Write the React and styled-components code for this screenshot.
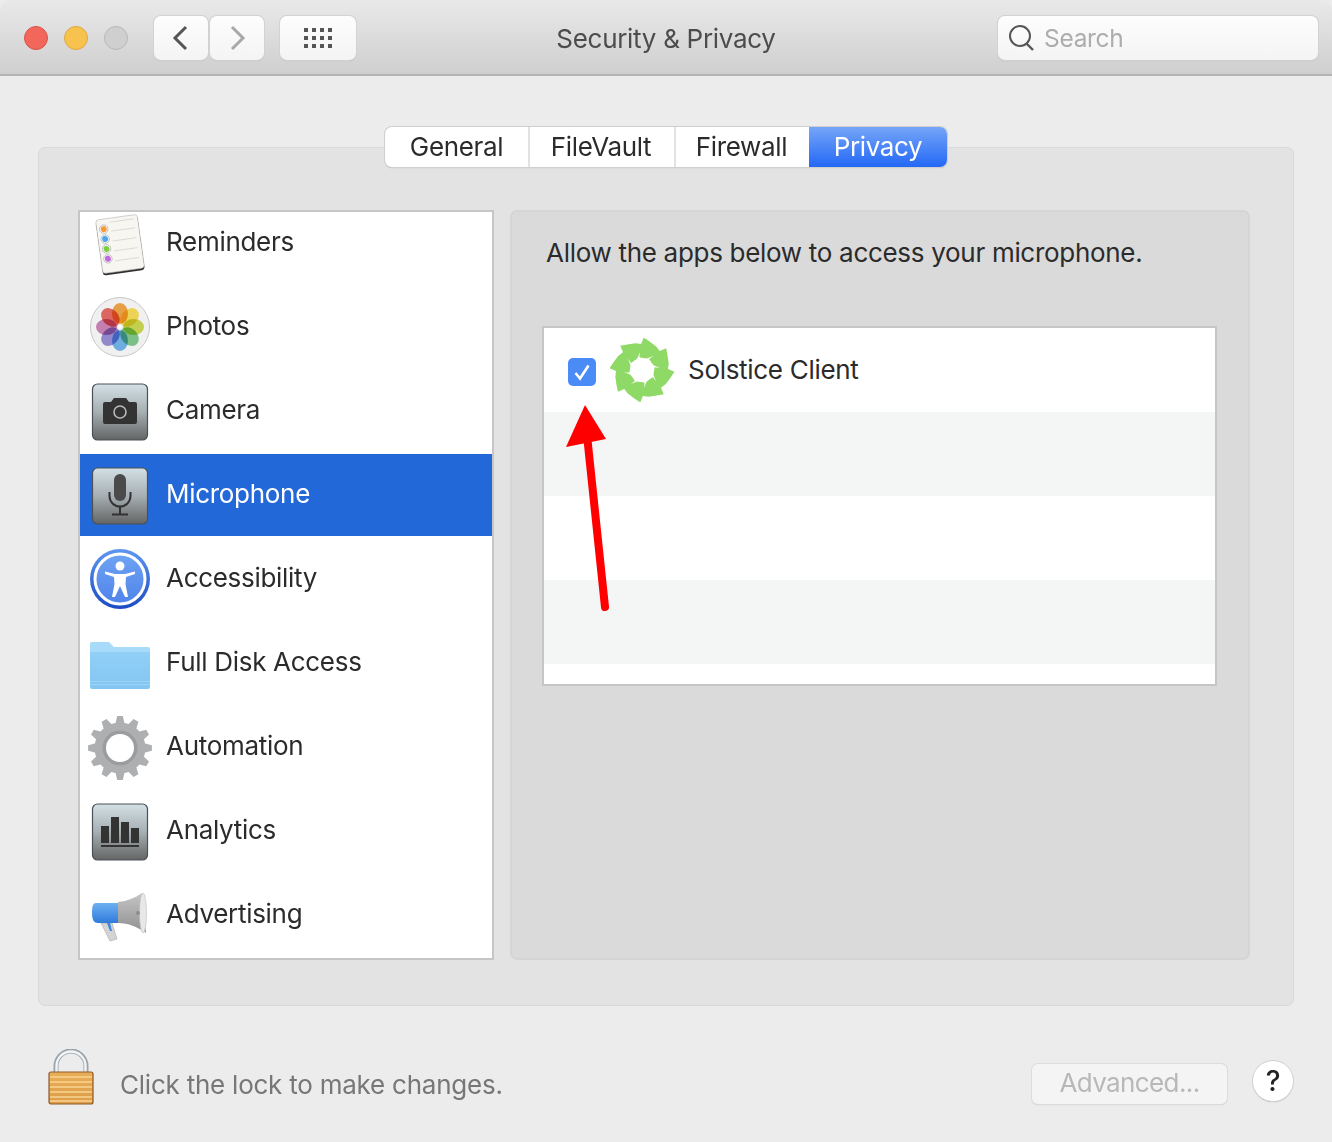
import React from 'react';
import styled, { createGlobalStyle } from 'styled-components';

const GlobalStyle = createGlobalStyle`
  html, body {
    margin: 0;
    padding: 0;
    background: #ececec;
  }
  * {
    box-sizing: border-box;
  }
`;

const Page = styled.div`
  position: relative;
  width: 1332px;
  height: 1142px;
  overflow: hidden;
  background: #ececec;
  font-family: Inter, "Liberation Sans", sans-serif;
  font-size: 26px;
  letter-spacing: -0.3px;
  color: #2b2b2b;
`;

const TitleBar = styled.header`
  height: 76px;
  display: flex;
  align-items: flex-start;
  padding: 16px 14px 0 24px;
  background: linear-gradient(#e9e9e9, #cfcfcf);
  border-bottom: 2px solid #b4b4b4;
  border-radius: 10px 10px 0 0;
`;

const Lights = styled.div`
  display: flex;
  gap: 16px;
  margin-top: 10px;
  margin-right: 26px;
`;

const Light = styled.span`
  width: 24px;
  height: 24px;
  border-radius: 50%;
  background: ${props => props.$fill};
  border: 1px solid ${props => props.$edge};
`;

const ToolButton = styled.div`
  width: ${props => props.$width}px;
  height: 44px;
  margin-right: ${props => props.$gap}px;
  display: flex;
  align-items: center;
  justify-content: center;
  background: linear-gradient(#fdfdfd, #f4f4f4);
  border-radius: 7px;
  box-shadow: 0 0 0 1px #d2d2d2, 0 1px 1px #a8a8a8;
`;

const Title = styled.h1`
  position: absolute;
  left: 0;
  right: 0;
  top: 21px;
  margin: 0;
  text-align: center;
  font-size: 26px;
  line-height: 36px;
  font-weight: 400;
  color: #4c4c4c;
`;

const SearchBox = styled.div`
  width: 320px;
  height: 44px;
  margin-left: auto;
  display: flex;
  align-items: center;
  gap: 10px;
  padding-left: 10px;
  background: linear-gradient(#fdfdfd, #f4f4f4);
  border-radius: 7px;
  box-shadow: 0 0 0 1px #d2d2d2, 0 1px 1px #a8a8a8;
  font-size: 24.5px;
  color: #adadad;
`;

const Content = styled.main`
  padding: 71px 38px 0;
`;

const Group = styled.section`
  height: 859px;
  background: #e3e3e3;
  border: 1px solid #d9d9d9;
  border-radius: 7px;
`;

const Tabs = styled.nav`
  display: flex;
  width: 562px;
  height: 40px;
  margin: -21px auto 0;
  border-radius: 7px;
  background: #fff;
  box-shadow: 0 0 0 1px #cfcfcf, 0 1px 1px #a8a8a8;
  letter-spacing: -0.35px;
`;

const Tab = styled.div`
  width: ${props => props.$width}px;
  display: flex;
  align-items: center;
  justify-content: center;
  padding: 0 ${props => (props.$divider ? 2 : 0)}px 2px 0;
  border-left: ${props => (props.$divider ? '2px solid #e2e2e2' : 'none')};
  border-radius: ${props => (props.$active ? '0 7px 7px 0' : '0')};
  background: ${props => (props.$active ? 'linear-gradient(#76a5f8, #2369f6)' : 'transparent')};
  color: ${props => (props.$active ? '#fff' : '#2b2b2b')};
`;

const Columns = styled.div`
  display: flex;
  gap: 16px;
  margin-top: 43px;
  padding: 0 43px 0 39px;
`;

const List = styled.div`
  width: 416px;
  height: 750px;
  overflow: hidden;
  background: #fff;
  border: 2px solid #c6c6c6;
`;

const ListInner = styled.div`
  margin-top: -11px;
`;

const Row = styled.div`
  height: 84px;
  display: flex;
  align-items: center;
  gap: 16px;
  padding-left: 10px;
  color: ${props => (props.$selected ? '#fff' : '#2b2b2b')};
  background: ${props => (props.$selected ? '#2368d9' : 'transparent')};
  background-clip: padding-box;
  border-top: ${props => (props.$selected ? '1px solid #fff' : 'none')};
  border-bottom: ${props => (props.$selected ? '1px solid #fff' : 'none')};
`;

const RowLabel = styled.span`
  padding-bottom: 4px;
`;

const RowIcon = styled.svg`
  width: 60px;
  height: 60px;
  flex: none;
  overflow: visible;
`;

const Panel = styled.div`
  width: 740px;
  height: 750px;
  padding: 25px 0 0 30px;
  background: #dadada;
  border: 2px solid #d5d5d5;
  border-radius: 7px;
`;

const PanelText = styled.p`
  margin: 0 0 0 4px;
  line-height: 32px;
  color: #2b2b2b;
`;

const AppTable = styled.div`
  width: 675px;
  height: 360px;
  margin-top: 57px;
  display: flex;
  flex-direction: column;
  background: #fff;
  border: 2px solid #c6c6c6;
`;

const AppRow = styled.div`
  height: 84px;
  flex: none;
  display: flex;
  align-items: center;
  padding-left: 24px;
  background: ${props => (props.$striped ? '#f4f5f5' : '#fff')};
`;

const Checkbox = styled.span`
  width: 28px;
  height: 28px;
  margin: 4px 14px 0 0;
  display: flex;
  align-items: center;
  justify-content: center;
  background: #4b8bf5;
  border-radius: 5px;
`;

const AppName = styled.span`
  margin-left: 14px;
  padding-bottom: 2px;
`;

const Footer = styled.footer`
  display: flex;
  align-items: flex-start;
  margin-top: 43px;
  padding: 0 1px 0 10px;
`;

const LockText = styled.span`
  margin: 20px 0 0 26px;
  line-height: 32px;
  letter-spacing: -0.23px;
  color: #777;
`;

const AdvancedButton = styled.div`
  width: 195px;
  height: 40px;
  margin: 15px 26px 0 auto;
  padding-bottom: 3px;
  display: flex;
  align-items: center;
  justify-content: center;
  background: #f4f4f4;
  border-radius: 6px;
  box-shadow: 0 0 0 1px #dcdcdc, 0 1px 1px #bdbdbd;
  letter-spacing: -0.6px;
  color: #b8b8b8;
`;

const HelpButton = styled.div`
  width: 40px;
  height: 40px;
  margin-top: 12px;
  display: flex;
  align-items: center;
  justify-content: center;
  background: #fff;
  border-radius: 50%;
  box-shadow: 0 0 0 1px #d2d2d2, 0 1px 1px #a0a0a0;
  font-size: 28px;
  font-weight: 500;
  color: #222;
`;

const ArrowOverlay = styled.svg`
  position: absolute;
  left: 560px;
  top: 400px;
  width: 60px;
  height: 215px;
`;

const polar = (cx, cy, r, deg) => {
  const a = (deg * Math.PI) / 180;
  return `${(cx + r * Math.cos(a)).toFixed(2)} ${(cy + r * Math.sin(a)).toFixed(2)}`;
};

const gearPath = () => {
  const points = [];
  for (let i = 0; i < 12; i++) {
    const a = i * 30 - 90;
    points.push(polar(30, 30, 25.5, a - 10), polar(30, 30, 32, a - 5), polar(30, 30, 32, a + 5), polar(30, 30, 25.5, a + 10));
  }
  return `M${points.join('L')}Z`;
};

// long blades that taper clockwise and end in a hooked tip, outside and around the hole
const swirlPath = () => {
  const outer = [];
  const inner = [];
  for (let i = 0; i < 8; i++) {
    const a = i * 45 - 87;
    outer.push(polar(32, 32, 32.5, a), polar(32, 32, 29.5, a + 12), polar(32, 32, 27.5, a + 28), polar(32, 32, 26, a + 40));
    inner.push(polar(32, 32, 12, a + 2), polar(32, 32, 12.5, a + 20), polar(32, 32, 18, a + 36), polar(32, 32, 13, a + 30));
  }
  return `M${outer.join('L')}ZM${inner.join('L')}Z`;
};

const RemindersIcon = () => (
  <RowIcon viewBox="0 0 60 60">
    <g transform="rotate(-8 30 31)">
      <rect x="9" y="5" width="42" height="55" rx="3" fill="#2e2e2e" />
      <rect x="9" y="4" width="42" height="54" rx="3" fill="#f7f6f1" stroke="#b5b5b5" strokeWidth="0.6" />
      <line x1="23" y1="8" x2="47" y2="8" stroke="#d6d6d0" strokeWidth="0.8" />
      {[
        ['#f59a34', 14],
        ['#4aa6f0', 24],
        ['#7ccf45', 34],
        ['#c169dc', 44],
      ].map(([color, y]) => (
        <g key={y}>
          <circle cx="16" cy={y} r="4.2" fill="#fff" stroke="#aaa" strokeWidth="0.7" />
          <circle cx="16" cy={y} r="3" fill={color} />
          <line x1="23" y1={y + 3} x2="47" y2={y + 3} stroke="#d6d6d0" strokeWidth="0.8" />
        </g>
      ))}
    </g>
  </RowIcon>
);

const petals = ['#f4a94a', '#fbe15a', '#cfdc55', '#82cc90', '#74b8ee', '#9a92d8', '#d088ba', '#ea6c66'];

const PhotosIcon = () => (
  <RowIcon viewBox="0 0 60 60">
    <circle cx="30" cy="30" r="29.5" fill="#f0f0f0" stroke="#c8c8c8" />
    {petals.map((color, i) => (
      <ellipse
        key={color}
        cx="30"
        cy="16.5"
        rx="8"
        ry="10.5"
        fill={color}
        transform={`rotate(${i * 45} 30 30)`}
        style={{ mixBlendMode: 'multiply' }}
      />
    ))}
    <circle cx="30" cy="30" r="1.2" fill="#fff" />
  </RowIcon>
);

const Tile = ({ id, children }) => (
  <RowIcon viewBox="0 0 60 60">
    <defs>
      <linearGradient id={id} x1="0" y1="0" x2="0" y2="1">
        <stop offset="0" stopColor="#d3e0e6" />
        <stop offset="0.5" stopColor="#a6afb2" />
        <stop offset="1" stopColor="#646464" />
      </linearGradient>
    </defs>
    <rect x="2.5" y="3" width="55" height="56" rx="5" fill={`url(#${id})`} stroke="#4a5058" strokeWidth="1.2" />
    {children}
  </RowIcon>
);

const CameraIcon = () => (
  <Tile id="cameraTile">
    <path d="M15 21h6l3-4h12l3 4h6a2 2 0 0 1 2 2v18a2 2 0 0 1-2 2H15a2 2 0 0 1-2-2V23a2 2 0 0 1 2-2z" fill="#333" />
    <circle cx="30" cy="31" r="6" fill="none" stroke="#b8b8b8" strokeWidth="1.6" />
  </Tile>
);

const MicIcon = () => (
  <Tile id="micTile">
    <rect x="24" y="9" width="12" height="27" rx="6" fill="#4a4a4a" />
    <path d="M19.500 27v4a10.500 10.500 0 0 0 21 0v-4" fill="none" stroke="#333" strokeWidth="2" />
    <path d="M30 42v7M22 49.500h16" fill="none" stroke="#333" strokeWidth="2" />
  </Tile>
);

const AccessibilityIcon = () => (
  <RowIcon viewBox="0 0 60 60">
    <defs>
      <linearGradient id="accessRim" x1="0" y1="0" x2="0" y2="1">
        <stop offset="0" stopColor="#5d97f0" />
        <stop offset="1" stopColor="#1c4cc4" />
      </linearGradient>
      <linearGradient id="accessFill" x1="0" y1="0" x2="0" y2="1">
        <stop offset="0" stopColor="#6fa3f3" />
        <stop offset="1" stopColor="#4f84ea" />
      </linearGradient>
    </defs>
    <circle cx="30" cy="30" r="30" fill="url(#accessRim)" />
    <circle cx="30" cy="30" r="25" fill="url(#accessFill)" stroke="#fff" strokeWidth="3" />
    <circle cx="30" cy="17" r="4.500" fill="#fff" />
    <path d="M15 22.500L25 25H35L45 22.500V25L36 28L35.500 35L38 48H35L30 37L25 48H22L24.500 35L24 28L15 25Z" fill="#fff" />
  </RowIcon>
);

const FolderIcon = () => (
  <RowIcon viewBox="0 0 60 60">
    <defs>
      <linearGradient id="folderFill" x1="0" y1="0" x2="0" y2="1">
        <stop offset="0" stopColor="#93d0f7" />
        <stop offset="1" stopColor="#82c6f2" />
      </linearGradient>
    </defs>
    <g transform="translate(0 7)">
      <path d="M0 4a2 2 0 0 1 2-2h17l5 5h34a2 2 0 0 1 2 2v6H0z" fill="#a8dbf9" />
      <path d="M0 9h60v38a2 2 0 0 1-2 2H2a2 2 0 0 1-2-2z" fill="url(#folderFill)" />
      <path d="M0 9h60v3H0z" fill="#a6dbfa" />
      <path d="M0 41.500h60M0 44.500h60" stroke="#9dd3f5" strokeWidth="1" />
    </g>
  </RowIcon>
);

const GearIcon = () => (
  <RowIcon viewBox="0 0 60 60">
    <path d={gearPath()} fill="#adafb1" transform="translate(0 1)" />
    <circle cx="30" cy="31" r="17.500" fill="#9a9c9e" />
    <circle cx="30" cy="31" r="14" fill="#fff" />
  </RowIcon>
);

const AnalyticsIcon = () => (
  <Tile id="analyticsTile">
    <path d="M11 25h8v17h-8zM21 16h8v26h-8zM31 21h8v21h-8zM41 27h8v15h-8z" fill="#333" />
    <rect x="11" y="44" width="38" height="2" fill="#333" />
  </Tile>
);

const MegaphoneIcon = () => (
  <RowIcon viewBox="0 0 60 60">
    <defs>
      <linearGradient id="hornBlue" x1="0" y1="0" x2="0" y2="1">
        <stop offset="0" stopColor="#6db0f2" />
        <stop offset="1" stopColor="#2f7bdb" />
      </linearGradient>
      <linearGradient id="hornGrey" x1="0" y1="0" x2="0" y2="1">
        <stop offset="0" stopColor="#c5c5c5" />
        <stop offset="1" stopColor="#8f8f8f" />
      </linearGradient>
    </defs>
    <path d="M11 38h11l5 16-7 2z" fill="#d4d4d4" stroke="#a8a8a8" strokeWidth="0.6" />
    <path d="M17 38h3l2 8h-2z" fill="#3f86e0" />
    <path d="M6 18h22v20H8c-4 0-6-3-6-10s1-10 4-10z" fill="url(#hornBlue)" />
    <path d="M28 17c9-1 17-4 24-9l4 40c-8-6-18-10-28-10z" fill="url(#hornGrey)" />
    <ellipse cx="53" cy="28" rx="3.500" ry="20" fill="#e8e8e8" stroke="#bdbdbd" strokeWidth="0.6" />
    <circle cx="48" cy="28" r="2" fill="#8d8d8d" />
  </RowIcon>
);

const SwirlIcon = () => (
  <svg width="64" height="64" viewBox="0 0 64 64">
    <path d={swirlPath()} fill="#8fd966" fillRule="evenodd" />
  </svg>
);

const LockIcon = () => (
  <svg width="46" height="56" viewBox="0 0 46 56">
    <defs>
      <linearGradient id="lockBody" x1="0" y1="0" x2="0" y2="1">
        <stop offset="0" stopColor="#e9ad58" />
        <stop offset="1" stopColor="#dd9c48" />
      </linearGradient>
    </defs>
    <path d="M8 24V17a15 15 0 0 1 30 0v7" fill="none" stroke="#9aa4ac" strokeWidth="5" />
    <path d="M8.500 24V17a14.500 14.500 0 0 1 29 0v7" fill="none" stroke="#f2f4f6" strokeWidth="2.400" />
    <rect x="1" y="23" width="44" height="32" rx="2" fill="url(#lockBody)" stroke="#8f5a2a" strokeWidth="1.200" />
    {[28, 33, 38, 43, 48, 52].map(y => (
      <line key={y} x1="2" y1={y} x2="44" y2={y} stroke="#f8d592" strokeWidth="1.400" />
    ))}
  </svg>
);

const rows = [
  { label: 'Reminders', Icon: RemindersIcon },
  { label: 'Photos', Icon: PhotosIcon },
  { label: 'Camera', Icon: CameraIcon },
  { label: 'Microphone', Icon: MicIcon, selected: true },
  { label: 'Accessibility', Icon: AccessibilityIcon },
  { label: 'Full Disk Access', Icon: FolderIcon },
  { label: 'Automation', Icon: GearIcon },
  { label: 'Analytics', Icon: AnalyticsIcon },
  { label: 'Advertising', Icon: MegaphoneIcon },
];

const tabs = [
  { label: 'General', width: 143 },
  { label: 'FileVault', width: 146, divider: true },
  { label: 'Firewall', width: 135, divider: true },
  { label: 'Privacy', width: 138, active: true },
];

export default function App() {
  return (
    <Page>
      <GlobalStyle />
      <TitleBar>
        <Lights>
          <Light $fill="#f2665c" $edge="#d9544a" />
          <Light $fill="#f8c24f" $edge="#e0a83c" />
          <Light $fill="#cfcfcf" $edge="#b8b8b8" />
        </Lights>
        <ToolButton $width={54} $gap={2}>
          <svg width="20" height="26" viewBox="0 0 20 26">
            <path d="M15 2L4 13l11 11" fill="none" stroke="#555" strokeWidth="3" />
          </svg>
        </ToolButton>
        <ToolButton $width={54} $gap={16}>
          <svg width="20" height="26" viewBox="0 0 20 26">
            <path d="M5 2l11 11L5 24" fill="none" stroke="#a8a8a8" strokeWidth="3" />
          </svg>
        </ToolButton>
        <ToolButton $width={76} $gap={0}>
          <svg width="28" height="20" viewBox="0 0 28 20" fill="#555">
            {[0, 8, 16].map(y =>
              [0, 8, 16, 24].map(x => <rect key={`${x}-${y}`} x={x} y={y} width="4" height="4" />)
            )}
          </svg>
        </ToolButton>
        <Title>Security &amp; Privacy</Title>
        <SearchBox>
          <svg width="26" height="28" viewBox="0 0 26 28">
            <circle cx="12" cy="12" r="10" fill="none" stroke="#555" strokeWidth="2" />
            <path d="M18.500 19.500L25 26" stroke="#555" strokeWidth="2.400" />
          </svg>
          Search
        </SearchBox>
      </TitleBar>

      <Content>
        <Group>
          <Tabs>
            {tabs.map(tab => (
              <Tab key={tab.label} $width={tab.width} $divider={tab.divider} $active={tab.active}>
                {tab.label}
              </Tab>
            ))}
          </Tabs>
          <Columns>
            <List>
              <ListInner>
                {rows.map(({ label, Icon, selected }) => (
                  <Row key={label} $selected={selected}>
                    <Icon />
                    <RowLabel>{label}</RowLabel>
                  </Row>
                ))}
              </ListInner>
            </List>
            <Panel>
              <PanelText>Allow the apps below to access your microphone.</PanelText>
              <AppTable>
                <AppRow>
                  <Checkbox>
                    <svg width="20" height="20" viewBox="0 0 20 20">
                      <path d="M3.500 11l4.500 5.500L16.500 3.500" fill="none" stroke="#fff" strokeWidth="2.600" />
                    </svg>
                  </Checkbox>
                  <SwirlIcon />
                  <AppName>Solstice Client</AppName>
                </AppRow>
                <AppRow $striped />
                <AppRow />
                <AppRow $striped />
              </AppTable>
            </Panel>
          </Columns>
        </Group>

        <Footer>
          <LockIcon />
          <LockText>Click the lock to make changes.</LockText>
          <AdvancedButton>Advanced...</AdvancedButton>
          <HelpButton>?</HelpButton>
        </Footer>
      </Content>

      <ArrowOverlay viewBox="0 0 60 215">
        <path d="M45 207L27.500 40" stroke="#fe0000" strokeWidth="8" strokeLinecap="round" fill="none" />
        <path d="M25 5L6 47l40-8z" fill="#fe0000" />
      </ArrowOverlay>
    </Page>
  );
}
